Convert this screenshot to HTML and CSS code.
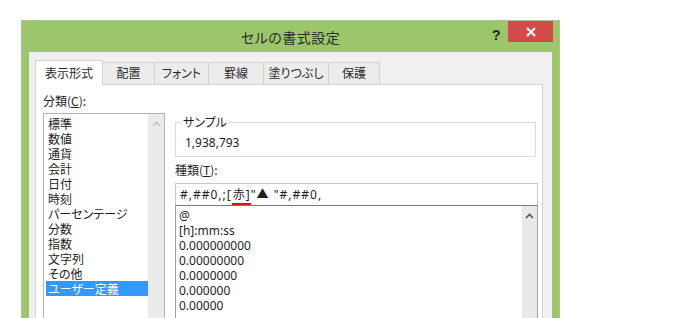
FILE: index.html
```html
<!DOCTYPE html>
<html lang="ja">
<head>
    <meta charset="UTF-8">
    <title>セルの書式設定</title>
    <link rel="stylesheet" href="styles.css">
</head>
<body>

    <!-- ダイアログ -->
    <div class="dialog">
        <div class="titlebar">
            <span class="title">セルの書式設定</span>
            <span class="help">?</span>
            <span class="close">
                <svg width="12" height="12" viewBox="0 0 12 12">
                    <path d="M2 2 L10 10 M10 2 L2 10" stroke="#fff" stroke-width="2"/>
                </svg>
            </span>
        </div>

        <div class="dialog-body">
            <!-- タブ -->
            <div class="tabs">
                <div class="tab active">表示形式</div>
                <div class="tab">配置</div>
                <div class="tab">フォント</div>
                <div class="tab">罫線</div>
                <div class="tab">塗りつぶし</div>
                <div class="tab">保護</div>
            </div>

            <div class="panel">
                <div class="col-left">
                    <div class="label">分類(<u>C</u>):</div>
                    <div class="listbox category">
                        <ul>
                            <li>標準</li>
                            <li>数値</li>
                            <li>通貨</li>
                            <li>会計</li>
                            <li>日付</li>
                            <li>時刻</li>
                            <li>パーセンテージ</li>
                            <li>分数</li>
                            <li>指数</li>
                            <li>文字列</li>
                            <li>その他</li>
                            <li class="selected">ユーザー定義</li>
                        </ul>
                        <div class="scrollbar">
                            <svg width="9" height="6" viewBox="0 0 9 6">
                                <path d="M1 5 L4.5 1.5 L8 5" fill="none" stroke="#c4c4c4" stroke-width="1.6"/>
                            </svg>
                        </div>
                    </div>
                </div>

                <div class="col-right">
                    <fieldset class="sample">
                        <legend>サンプル</legend>
                        <div class="sample-value">1,938,793</div>
                    </fieldset>

                    <div class="label kind">種類(<u>T</u>):</div>
                    <div class="format-input">#,##0,;[<span class="mark">赤]</span>"▲ "#,##0,</div>

                    <div class="listbox formats">
                        <ul>
                            <li>@</li>
                            <li>[h]:mm:ss</li>
                            <li>0.000000000</li>
                            <li>0.00000000</li>
                            <li>0.0000000</li>
                            <li>0.000000</li>
                            <li>0.00000</li>
                        </ul>
                        <div class="scrollbar">
                            <svg width="9" height="6" viewBox="0 0 9 6">
                                <path d="M1 5 L4.5 1.5 L8 5" fill="none" stroke="#555" stroke-width="1.6"/>
                            </svg>
                        </div>
                    </div>
                </div>
            </div>
        </div>
    </div>

</body>
</html>
```

FILE: styles.css
```css
/* 全体 */
html, body {
    margin: 0;
    padding: 0;
    height: 318px;
    overflow: hidden;
    background: #fff;
}

body {
    font-family: "Noto Sans CJK JP", sans-serif;
    font-size: 12px;
    color: #1e1e1e;
    font-feature-settings: "palt";
}

/* ダイアログ枠 */
.dialog {
    margin: 20px 0 0 21px;
    border: 1px solid #a9c98a;
    background: #9bc76a;
    padding: 0 7px 8px 7px;
    width: 523px;
}

.titlebar {
    position: relative;
    height: 31px;
    display: flex;
    align-items: center;
    justify-content: center;
}

.title {
    font-size: 14px;
    color: #2b2b2b;
    letter-spacing: 0.5px;
}

.help {
    position: absolute;
    left: 463px;
    top: 6px;
    font-family: "Liberation Sans", sans-serif;
    font-weight: bold;
    font-size: 14px;
    color: #222;
}

.close {
    position: absolute;
    left: 479px;
    top: 0;
    width: 45px;
    height: 21px;
    background: #d34b48;
    display: flex;
    align-items: center;
    justify-content: center;
}

/* 本体 */
.dialog-body {
    background: #f0f0f0;
    padding: 8px 9px 0 6px;
    height: 300px;
}

.tabs {
    display: flex;
    align-items: flex-end;
    height: 24px;
}

.tab {
    box-sizing: border-box;
    height: 22px;
    line-height: 20px;
    text-align: center;
    white-space: nowrap;
    border: 1px solid #d4d4d4;
    border-bottom: none;
    margin-right: -1px;
    background: #ececec;
    color: #2b2b2b;
}

.tab.active {
    width: 68px;
    height: 25px;
    line-height: 24px;
    background: #fff;
    position: relative;
    z-index: 1;
    margin-bottom: -1px;
}

.tabs .tab:nth-child(2) { width: 53px; }
.tabs .tab:nth-child(3) { width: 55px; }
.tabs .tab:nth-child(4) { width: 56px; }
.tabs .tab:nth-child(5) { width: 66px; }
.tabs .tab:nth-child(6) { width: 52px; }

.panel {
    background: #fff;
    border: 1px solid #d4d4d4;
    height: 260px;
    display: flex;
    gap: 10px;
    padding-left: 7px;
}

.label {
    line-height: 16px;
}

.label u {
    text-decoration-thickness: 1px;
}

/* 左：分類 */
.col-left {
    width: 122px;
    padding-top: 8px;
}

.col-left .label {
    margin-bottom: 4px;
}

.listbox {
    display: flex;
    border: 1px solid #b4b4b4;
    background: #fff;
}

.listbox ul {
    list-style: none;
    margin: 0;
    padding: 0;
    flex: 1;
}

.category {
    height: 220px;
}

.category ul {
    padding: 2px 0 0 2px;
}

.category li {
    line-height: 15px;
    padding-left: 2px;
}

.category li.selected {
    background: #3399ff;
    color: #fff;
}

.scrollbar {
    width: 16px;
    background: #ebebeb;
    display: flex;
    justify-content: center;
    padding-top: 7px;
    box-sizing: border-box;
}

/* 右：サンプル・種類 */
.col-right {
    width: 363px;
    padding-top: 29px;
}

.sample {
    margin: 0;
    width: 361px;
    box-sizing: border-box;
    border: 1px solid #dcdcdc;
    padding: 0 0 4px 8px;
    height: 43px;
}

.sample legend {
    padding: 0 1px;
    margin-left: -2px;
    line-height: 16px;
}

.sample-value {
    line-height: 16px;
    margin-top: 5px;
    padding-left: 1px;
    font-family: "Noto Sans", sans-serif;
    font-size: 12px;
}

.kind {
    margin-top: 5px;
    margin-bottom: 5px;
}

.format-input {
    height: 21px;
    line-height: 21px;
    border: 1px solid #c8c8cc;
    border-bottom: none;
    padding-left: 4px;
    font-family: "Noto Sans", "Noto Sans CJK JP", sans-serif;
    font-size: 12px;
    letter-spacing: 1px;
}

.mark {
    border-bottom: 2px solid #e01010;
    padding-left: 1px;
}

.formats {
    height: 140px;
    border-color: #a0a0b4;
    border-top: 1px solid #7a7a7a;
}

.formats ul {
    padding: 2px 0 0 3px;
    font-family: "Noto Sans", sans-serif;
    font-size: 12px;
}

.formats li {
    line-height: 15px;
}

.formats .scrollbar {
    width: 15px;
    background: #e9e9e9;
    padding-top: 7px;
}
```
